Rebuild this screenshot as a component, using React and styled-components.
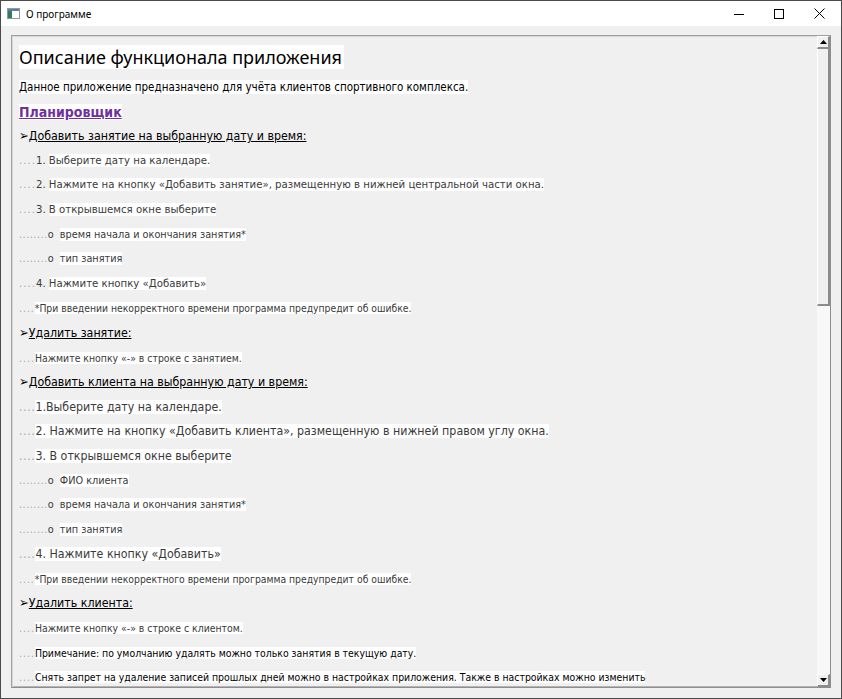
import React from 'react';
import styled, { createGlobalStyle } from 'styled-components';

const GlobalStyle = createGlobalStyle`
  html, body {
    margin: 0;
    padding: 0;
    background: #f0f0f0;
  }
  * {
    box-sizing: border-box;
  }
`

const Window = styled.div`
  width: 842px;
  height: 699px;
  display: flex;
  flex-direction: column;
  background: #f0f0f0;
  border: 1px solid #4a4a4a;
  overflow: hidden;
`

const TitleBar = styled.div`
  height: 25px;
  flex: none;
  display: flex;
  align-items: center;
  background: #ffffff;
`

const AppIcon = styled.div`
  width: 13px;
  height: 11px;
  margin: 0 6px 0 6px;
  display: flex;
  border: 1px solid #8a9aa8;
  background: #ffffff;
`

const Title = styled.span`
  flex: 1;
  font-family: "Noto Sans", "Open Sans", sans-serif;
  font-size: 10px;
  color: #000;
`

const Controls = styled.div`
  display: flex;
  height: 100%;
  padding-right: 2px;
`

const ControlButton = styled.div`
  width: 40px;
  height: 100%;
  display: flex;
  align-items: center;
  justify-content: center;
`

const Body = styled.div`
  flex: 1;
  min-height: 0;
  padding: 9px 10px 10px 10px;
  display: flex;
`

const Panel = styled.div`
  flex: 1;
  display: flex;
  border: 1px solid #a0a0a0;
  border-right-color: #8e8e8e;
  border-bottom-color: #8e8e8e;
  box-shadow: inset 1px 1px 0 #d8d8d8, inset -1px -1px 0 #b4b4b4;
  background: #f0f0f0;
  min-height: 0;
`

const Content = styled.div`
  flex: 1;
  min-width: 0;
  overflow: hidden;
  padding: 9px 0 0 7px;
`

const Heading = styled.div`
  font-family: "Noto Sans", "Open Sans", sans-serif;
  font-size: 18px;
  line-height: 24px;
  height: 24px;
  margin-bottom: 6px;
  color: #000;
  span {
    background: #ffffff;
    padding-right: 2px;
  }
`

const Line = styled.div`
  font-family: "DejaVu Sans Condensed", "DejaVu Sans", sans-serif;
  font-size: ${p => p.size || 12}px;
  line-height: ${p => p.h || 24.6}px;
  height: ${p => p.h || 24.6}px;
  white-space: nowrap;
  color: ${p => p.color || '#3a3a3a'};
`

const Dots = styled.span`
  color: #a8a8a8;
  letter-spacing: ${p => p.spread || 0.5}px;
`

const Mark = styled.span`
  color: #3a3a3a;
`

const Hl = styled.span`
  background: #ffffff;
`

const Planner = styled.span`
  font-weight: bold;
  color: #7030a0;
  text-decoration: underline;
  background: #ffffff;
`

const Section = styled.span`
  color: #000;
  text-decoration: underline;
`

const Arrow = styled.span`
  color: #000;
  font-size: 13px;
`

const ScrollBar = styled.div`
  width: 13px;
  flex: none;
  display: flex;
  flex-direction: column;
  background: #f8f8f8;
`

const ScrollButton = styled.div`
  height: 13px;
  flex: none;
  display: flex;
  align-items: center;
  justify-content: center;
  background: #f0f0f0;
  border-right: 2px solid #8c8c8c;
  border-bottom: 2px solid #8c8c8c;
  border-top: 1px solid #ffffff;
  border-left: 1px solid #ffffff;
`

const Thumb = styled.div`
  height: 257px;
  flex: none;
  background: #f0f0f0;
  border-right: 2px solid #8c8c8c;
  border-bottom: 2px solid #8c8c8c;
  border-left: 1px solid #ffffff;
`

const Track = styled.div`
  flex: 1;
  background: #f8f8f8;
`

const Triangle = ({ down }) => (
  <svg width="7" height="4" viewBox="0 0 7 4">
    <path d={down ? 'M0 0 H7 L3.5 4 Z' : 'M0 4 H7 L3.5 0 Z'} fill="#000" />
  </svg>
);

const lines = [
  { kind: 'intro', text: 'Данное приложение предназначено для учёта клиентов спортивного комплекса.' },
  { kind: 'planner', text: 'Планировщик' },
  { kind: 'section', text: 'Добавить занятие на выбранную дату и время:' },
  { kind: 'step', num: '1. ', text: 'Выберите дату на календаре.' },
  { kind: 'step', num: '2. ', text: 'Нажмите на кнопку «Добавить занятие», размещенную в нижней центральной части окна.' },
  { kind: 'step', num: '3. ', text: 'В открывшемся окне выберите' },
  { kind: 'bullet', text: 'время начала и окончания занятия*' },
  { kind: 'bullet', text: 'тип занятия' },
  { kind: 'step', num: '4. ', text: 'Нажмите кнопку «Добавить»' },
  { kind: 'note', text: '*При введении некорректного времени программа предупредит об ошибке.' },
  { kind: 'section', text: 'Удалить занятие:' },
  { kind: 'small', text: 'Нажмите кнопку «-» в строке с занятием.' },
  { kind: 'section', text: 'Добавить клиента на выбранную дату и время:' },
  { kind: 'bigstep', text: '1.Выберите дату на календаре.' },
  { kind: 'bigstep', text: '2. Нажмите на кнопку «Добавить клиента», размещенную в нижней правом углу окна.' },
  { kind: 'bigstep', text: '3. В открывшемся окне выберите' },
  { kind: 'bullet', text: 'ФИО клиента' },
  { kind: 'bullet', text: 'время начала и окончания занятия*' },
  { kind: 'bullet', text: 'тип занятия' },
  { kind: 'bigstep', text: '4. Нажмите кнопку «Добавить»' },
  { kind: 'note', text: '*При введении некорректного времени программа предупредит об ошибке.' },
  { kind: 'section', text: 'Удалить клиента:' },
  { kind: 'small', text: 'Нажмите кнопку «-» в строке с клиентом.' },
  { kind: 'plain', text: 'Примечание: по умолчанию удалять можно только занятия в текущую дату.' },
  { kind: 'plain', text: 'Снять запрет на удаление записей прошлых дней можно в настройках приложения. Также в настройках можно изменить' },
];

function renderLine(l, i) {
  switch (l.kind) {
    case 'intro':
      return <Line key={i} size={11.5} color="#000"><Hl>{l.text}</Hl></Line>;
    case 'planner':
      return <Line key={i} size={14}><Planner>{l.text}</Planner></Line>;
    case 'section':
      return (
        <Line key={i} size={12.3} color="#000">
          <Arrow>➢</Arrow><Section>{l.text}</Section>
        </Line>
      );
    case 'step':
      return (
        <Line key={i} size={11.3}>
          <Dots spread={1}>....</Dots><Mark>{l.num}</Mark><Hl>{l.text}</Hl>
        </Line>
      );
    case 'bigstep':
      return (
        <Line key={i} size={12.3}>
          <Dots spread={0.6}>....</Dots><Hl>{l.text}</Hl>
        </Line>
      );
    case 'bullet':
      return (
        <Line key={i} size={10.8}>
          <Dots>........</Dots><Mark>o&nbsp;&nbsp;</Mark><Hl>{l.text}</Hl>
        </Line>
      );
    case 'note':
      return (
        <Line key={i} size={10.3}>
          <Dots spread={1}>....</Dots><Hl>{l.text}</Hl>
        </Line>
      );
    case 'small':
      return (
        <Line key={i} size={10.4}>
          <Dots spread={1}>....</Dots><Hl>{l.text}</Hl>
        </Line>
      );
    default:
      return (
        <Line key={i} size={10.4} color="#000">
          <Dots spread={1}>....</Dots><Hl>{l.text}</Hl>
        </Line>
      );
  }
}

export default function App() {
  return (
    <Window>
      <GlobalStyle />
      <TitleBar>
        <AppIcon>
          <svg width="11" height="9" viewBox="0 0 11 9">
            <rect x="0" y="0" width="4" height="9" fill="#2f7d5a" />
            <rect x="4" y="0" width="7" height="9" fill="#ffffff" />
            <rect x="0" y="0" width="11" height="2" fill="#5b7ea6" />
          </svg>
        </AppIcon>
        <Title>О программе</Title>
        <Controls>
          <ControlButton>
            <svg width="10" height="10" viewBox="0 0 10 10">
              <path d="M0 5.5 H10" stroke="#000" strokeWidth="1" />
            </svg>
          </ControlButton>
          <ControlButton>
            <svg width="10" height="10" viewBox="0 0 10 10">
              <rect x="0.5" y="0.5" width="9" height="9" fill="none" stroke="#000" strokeWidth="1" />
            </svg>
          </ControlButton>
          <ControlButton>
            <svg width="11" height="11" viewBox="0 0 11 11">
              <path d="M0.5 0.5 L10.5 10.5 M10.5 0.5 L0.5 10.5" stroke="#000" strokeWidth="1" />
            </svg>
          </ControlButton>
        </Controls>
      </TitleBar>
      <Body>
        <Panel>
          <Content>
            <Heading><span>Описание функционала приложения</span></Heading>
            {lines.map(renderLine)}
          </Content>
          <ScrollBar>
            <ScrollButton><Triangle /></ScrollButton>
            <Thumb />
            <Track />
            <ScrollButton><Triangle down /></ScrollButton>
          </ScrollBar>
        </Panel>
      </Body>
    </Window>
  );
}
